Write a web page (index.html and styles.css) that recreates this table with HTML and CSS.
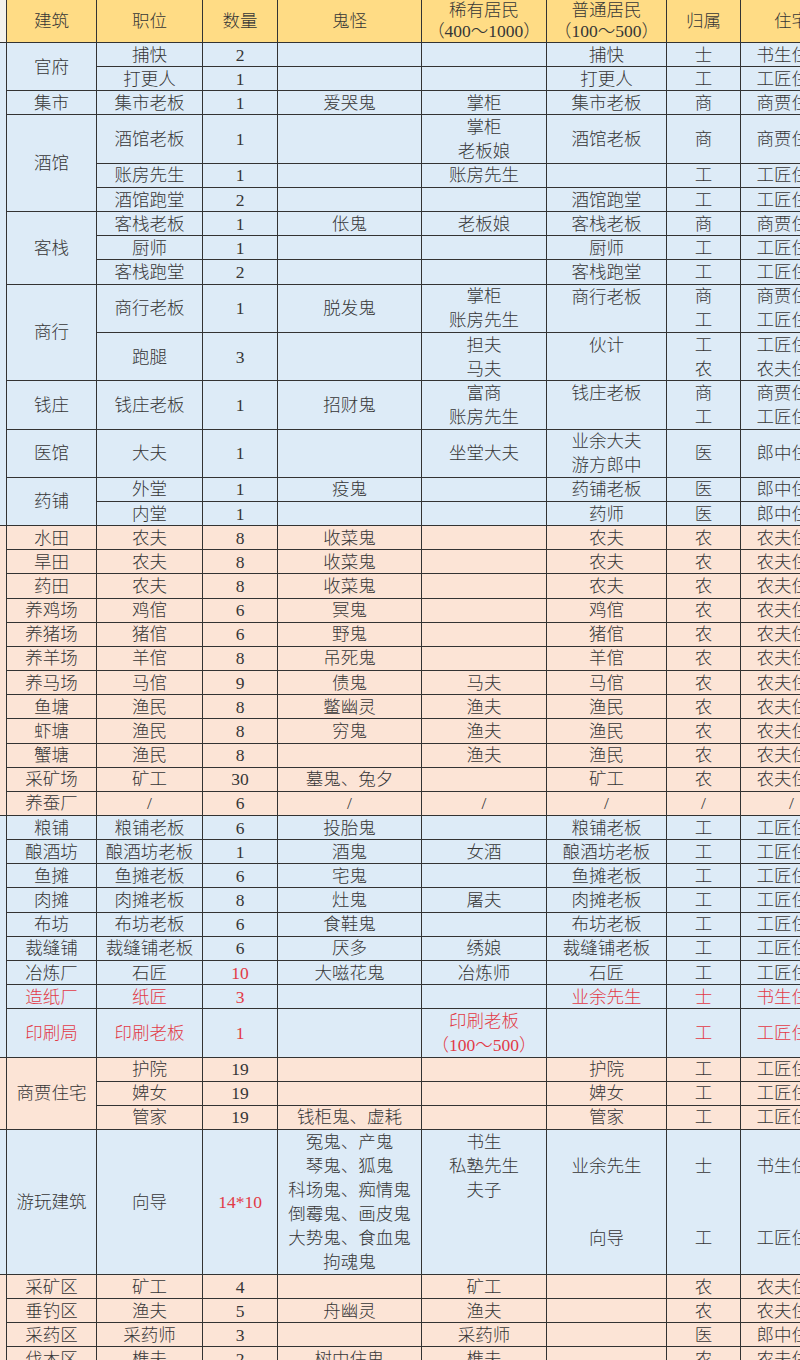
FILE: index.html
```html
<!DOCTYPE html>
<html lang="zh-CN">
<head>
<meta charset="utf-8">
<title>建筑职位表</title>
<link rel="stylesheet" href="styles.css">
</head>
<body>
<div class="sheet">
  <div class="band head">
    <div class="sl"></div>
    <div>建筑</div><div>职位</div><div>数量</div><div>鬼怪</div>
    <div>稀有居民<br>（400～1000）</div><div>普通居民<br>（100～500）</div>
    <div>归属</div><div>住宅</div>
  </div>

  <div class="band blue">
    <div class="sl s20"></div>
    <div class="row"><div class="s2">官府</div><div>捕快</div><div>2</div><div></div><div></div><div>捕快</div><div>士</div><div>书生住宅</div></div>
    <div class="row"><div>打更人</div><div>1</div><div></div><div></div><div>打更人</div><div>工</div><div>工匠住宅</div></div>
    <div class="row"><div>集市</div><div>集市老板</div><div>1</div><div>爱哭鬼</div><div>掌柜</div><div>集市老板</div><div>商</div><div>商贾住宅</div></div>
    <div class="row"><div class="s4">酒馆</div><div class="s2">酒馆老板</div><div class="s2">1</div><div class="s2"></div><div class="s2">掌柜<br>老板娘</div><div class="s2">酒馆老板</div><div class="s2">商</div><div class="s2">商贾住宅</div></div>
    <div class="row"><div>账房先生</div><div>1</div><div></div><div>账房先生</div><div></div><div>工</div><div>工匠住宅</div></div>
    <div class="row"><div>酒馆跑堂</div><div>2</div><div></div><div></div><div>酒馆跑堂</div><div>工</div><div>工匠住宅</div></div>
    <div class="row"><div class="s3">客栈</div><div>客栈老板</div><div>1</div><div>伥鬼</div><div>老板娘</div><div>客栈老板</div><div>商</div><div>商贾住宅</div></div>
    <div class="row"><div>厨师</div><div>1</div><div></div><div></div><div>厨师</div><div>工</div><div>工匠住宅</div></div>
    <div class="row"><div>客栈跑堂</div><div>2</div><div></div><div></div><div>客栈跑堂</div><div>工</div><div>工匠住宅</div></div>
    <div class="row"><div class="s4">商行</div><div class="s2">商行老板</div><div class="s2">1</div><div class="s2">脱发鬼</div><div class="s2">掌柜<br>账房先生</div><div class="s2 t">商行老板</div><div class="s2">商<br>工</div><div class="s2">商贾住宅<br>工匠住宅</div></div>
    <div class="row"><div class="s2">跑腿</div><div class="s2">3</div><div class="s2"></div><div class="s2">担夫<br>马夫</div><div class="s2 t">伙计</div><div class="s2">工<br>农</div><div class="s2">工匠住宅<br>农夫住宅</div></div>
    <div class="row"><div class="s2">钱庄</div><div class="s2">钱庄老板</div><div class="s2">1</div><div class="s2">招财鬼</div><div class="s2">富商<br>账房先生</div><div class="s2 t">钱庄老板</div><div class="s2">商<br>工</div><div class="s2">商贾住宅<br>工匠住宅</div></div>
    <div class="row"><div class="s2">医馆</div><div class="s2">大夫</div><div class="s2">1</div><div class="s2"></div><div class="s2">坐堂大夫</div><div class="s2">业余大夫<br>游方郎中</div><div class="s2">医</div><div class="s2">郎中住宅</div></div>
    <div class="row"><div class="s2">药铺</div><div>外堂</div><div>1</div><div>疫鬼</div><div></div><div>药铺老板</div><div>医</div><div>郎中住宅</div></div>
    <div class="row"><div>内堂</div><div>1</div><div></div><div></div><div>药师</div><div>医</div><div>郎中住宅</div></div>
  </div>

  <div class="band orange">
    <div class="sl s12"></div>
    <div class="row"><div>水田</div><div>农夫</div><div>8</div><div>收菜鬼</div><div></div><div>农夫</div><div>农</div><div>农夫住宅</div></div>
    <div class="row"><div>旱田</div><div>农夫</div><div>8</div><div>收菜鬼</div><div></div><div>农夫</div><div>农</div><div>农夫住宅</div></div>
    <div class="row"><div>药田</div><div>农夫</div><div>8</div><div>收菜鬼</div><div></div><div>农夫</div><div>农</div><div>农夫住宅</div></div>
    <div class="row"><div>养鸡场</div><div>鸡倌</div><div>6</div><div>冥鬼</div><div></div><div>鸡倌</div><div>农</div><div>农夫住宅</div></div>
    <div class="row"><div>养猪场</div><div>猪倌</div><div>6</div><div>野鬼</div><div></div><div>猪倌</div><div>农</div><div>农夫住宅</div></div>
    <div class="row"><div>养羊场</div><div>羊倌</div><div>8</div><div>吊死鬼</div><div></div><div>羊倌</div><div>农</div><div>农夫住宅</div></div>
    <div class="row"><div>养马场</div><div>马倌</div><div>9</div><div>债鬼</div><div>马夫</div><div>马倌</div><div>农</div><div>农夫住宅</div></div>
    <div class="row"><div>鱼塘</div><div>渔民</div><div>8</div><div>鳖幽灵</div><div>渔夫</div><div>渔民</div><div>农</div><div>农夫住宅</div></div>
    <div class="row"><div>虾塘</div><div>渔民</div><div>8</div><div>穷鬼</div><div>渔夫</div><div>渔民</div><div>农</div><div>农夫住宅</div></div>
    <div class="row"><div>蟹塘</div><div>渔民</div><div>8</div><div></div><div>渔夫</div><div>渔民</div><div>农</div><div>农夫住宅</div></div>
    <div class="row"><div>采矿场</div><div>矿工</div><div>30</div><div>墓鬼、兔夕</div><div></div><div>矿工</div><div>农</div><div>农夫住宅</div></div>
    <div class="row"><div>养蚕厂</div><div>/</div><div>6</div><div>/</div><div>/</div><div>/</div><div>/</div><div>/</div></div>
  </div>

  <div class="band blue">
    <div class="sl s10"></div>
    <div class="row"><div>粮铺</div><div>粮铺老板</div><div>6</div><div>投胎鬼</div><div></div><div>粮铺老板</div><div>工</div><div>工匠住宅</div></div>
    <div class="row"><div>酿酒坊</div><div>酿酒坊老板</div><div>1</div><div>酒鬼</div><div>女酒</div><div>酿酒坊老板</div><div>工</div><div>工匠住宅</div></div>
    <div class="row"><div>鱼摊</div><div>鱼摊老板</div><div>6</div><div>宅鬼</div><div></div><div>鱼摊老板</div><div>工</div><div>工匠住宅</div></div>
    <div class="row"><div>肉摊</div><div>肉摊老板</div><div>8</div><div>灶鬼</div><div>屠夫</div><div>肉摊老板</div><div>工</div><div>工匠住宅</div></div>
    <div class="row"><div>布坊</div><div>布坊老板</div><div>6</div><div>食鞋鬼</div><div></div><div>布坊老板</div><div>工</div><div>工匠住宅</div></div>
    <div class="row"><div>裁缝铺</div><div>裁缝铺老板</div><div>6</div><div>厌多</div><div>绣娘</div><div>裁缝铺老板</div><div>工</div><div>工匠住宅</div></div>
    <div class="row"><div>冶炼厂</div><div>石匠</div><div class="red">10</div><div>大嗞花鬼</div><div>冶炼师</div><div>石匠</div><div>工</div><div>工匠住宅</div></div>
    <div class="row red"><div>造纸厂</div><div>纸匠</div><div>3</div><div></div><div></div><div>业余先生</div><div>士</div><div>书生住宅</div></div>
    <div class="row red"><div class="s2">印刷局</div><div class="s2">印刷老板</div><div class="s2">1</div><div class="s2"></div><div class="s2">印刷老板<br>（100～500）</div><div class="s2"></div><div class="s2">工</div><div class="s2">工匠住宅</div></div>
  </div>

  <div class="band orange">
    <div class="sl s3"></div>
    <div class="row"><div class="s3">商贾住宅</div><div>护院</div><div>19</div><div></div><div></div><div>护院</div><div>工</div><div>工匠住宅</div></div>
    <div class="row"><div>婢女</div><div>19</div><div></div><div></div><div>婢女</div><div>工</div><div>工匠住宅</div></div>
    <div class="row"><div>管家</div><div>19</div><div>钱柜鬼、虚耗</div><div></div><div>管家</div><div>工</div><div>工匠住宅</div></div>
  </div>

  <div class="band blue">
    <div class="sl s6"></div>
    <div class="row"><div class="s6">游玩建筑</div><div class="s6">向导</div><div class="s6 red">14*10</div><div class="s6">冤鬼、产鬼<br>琴鬼、狐鬼<br>科场鬼、痴情鬼<br>倒霉鬼、画皮鬼<br>大势鬼、食血鬼<br>拘魂鬼</div><div class="s6 t">书生<br>私塾先生<br>夫子</div><div class="s6">&nbsp;<br>业余先生<br>&nbsp;<br>&nbsp;<br>向导<br>&nbsp;</div><div class="s6">&nbsp;<br>士<br>&nbsp;<br>&nbsp;<br>工<br>&nbsp;</div><div class="s6">&nbsp;<br>书生住宅<br>&nbsp;<br>&nbsp;<br>工匠住宅<br>&nbsp;</div></div>
  </div>

  <div class="band orange">
    <div class="sl s4"></div>
    <div class="row"><div>采矿区</div><div>矿工</div><div>4</div><div></div><div>矿工</div><div></div><div>农</div><div>农夫住宅</div></div>
    <div class="row"><div>垂钓区</div><div>渔夫</div><div>5</div><div>舟幽灵</div><div>渔夫</div><div></div><div>农</div><div>农夫住宅</div></div>
    <div class="row"><div>采药区</div><div>采药师</div><div>3</div><div></div><div>采药师</div><div></div><div>医</div><div>郎中住宅</div></div>
    <div class="row"><div>伐木区</div><div>樵夫</div><div>2</div><div>树中住鬼</div><div>樵夫</div><div></div><div>农</div><div>农夫住宅</div></div>
  </div>
</div>
</body>
</html>
```

FILE: styles.css
```css
html, body {
  margin: 0;
  padding: 0;
  overflow: hidden;
  background: #ffffff;
}

.sheet {
  display: grid;
  grid-template-columns: 6px 89px 105px 74px 143px 124px 119px 73px 101px;
  grid-template-rows: 42px;
  grid-auto-rows: 23.17px;
  gap: 1px;
  width: max-content;
  background: #333333;
  font-family: "Liberation Serif", "Noto Sans CJK SC", serif;
  font-size: 17.5px;
  font-weight: 300;
  color: #363636;
}

.band,
.row {
  display: contents;
}

.head > div,
.row > div {
  display: flex;
  align-items: center;
  justify-content: center;
  text-align: center;
  line-height: 24px;
  white-space: nowrap;
}

.head > div {
  background: #ffdc85;
  line-height: 21px;
}

.head > .sl {
  background: #f3f1ec;
}

.blue > .sl,
.blue .row > div {
  background: #ddebf7;
}

.orange > .sl,
.orange .row > div {
  background: #fce4d6;
}

.s2 { grid-row: span 2; }
.s3 { grid-row: span 3; }
.s4 { grid-row: span 4; }
.s6 { grid-row: span 6; }
.s10 { grid-row: span 10; }
.s12 { grid-row: span 12; }
.s20 { grid-row: span 20; }

.row > .t {
  align-items: flex-start;
}

.red {
  color: #e23a46;
}
```
